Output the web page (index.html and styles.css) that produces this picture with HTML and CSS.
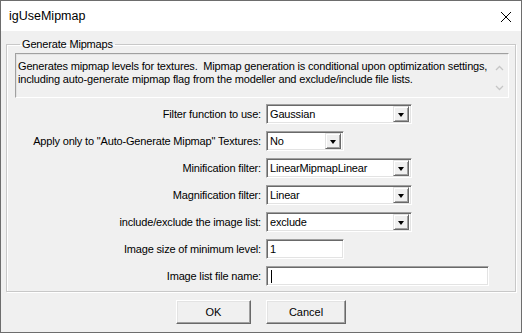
FILE: index.html
```html
<!DOCTYPE html>
<html lang="en">
<head>
  <meta charset="UTF-8">
  <title>igUseMipmap</title>
  <link rel="stylesheet" href="styles.css">
</head>
<body>
  <!-- Dialog window -->
  <div class="window">
    <div class="titlebar">
      <span class="title">igUseMipmap</span>
      <svg class="close" width="12" height="12" viewBox="0 0 12 12">
        <path d="M1 1 L11 11 M11 1 L1 11" stroke="#000" stroke-width="1" fill="none"/>
      </svg>
    </div>

    <div class="client">
      <fieldset class="group">
        <legend>Generate Mipmaps</legend>

        <div class="desc">
          <p>Generates mipmap levels for textures.&nbsp; Mipmap generation is conditional upon optimization settings, including auto-generate mipmap flag from the modeller and exclude/include file lists.</p>
          <div class="vscroll">
            <svg width="9" height="6" viewBox="0 0 9 6"><path d="M1 5 L4.5 1.5 L8 5" stroke="#c6c6c6" stroke-width="1.3" fill="none"/></svg>
            <svg width="9" height="6" viewBox="0 0 9 6"><path d="M1 1 L4.5 4.5 L8 1" stroke="#c6c6c6" stroke-width="1.3" fill="none"/></svg>
          </div>
        </div>

        <div class="form">
          <label>Filter function to use:</label>
          <div class="combo wide"><span class="value">Gaussian</span><span class="drop"></span></div>

          <label>Apply only to "Auto-Generate Mipmap" Textures:</label>
          <div class="combo short"><span class="value">No</span><span class="drop"></span></div>

          <label>Minification filter:</label>
          <div class="combo wide"><span class="value">LinearMipmapLinear</span><span class="drop"></span></div>

          <label>Magnification filter:</label>
          <div class="combo wide"><span class="value">Linear</span><span class="drop"></span></div>

          <label>include/exclude the image list:</label>
          <div class="combo wide"><span class="value">exclude</span><span class="drop"></span></div>

          <label>Image size of minimum level:</label>
          <div class="edit short"><span class="value">1</span></div>

          <label>Image list file name:</label>
          <div class="edit long"><span class="caret"></span></div>
        </div>
      </fieldset>

      <div class="buttons">
        <button class="btn default">OK</button>
        <button class="btn cancel">Cancel</button>
      </div>
    </div>
  </div>
</body>
</html>
```

FILE: styles.css
```css
/* Classic Win32 dialog look */
body {
  margin: 0;
  font-family: "Liberation Sans", Arial, sans-serif;
  font-size: 11px;
  letter-spacing: -0.17px;
  color: #000;
  background: #fff;
}

.window {
  width: 522px;
  height: 333px;
  box-sizing: border-box;
  border: 1px solid #6d6d6d;
  display: flex;
  flex-direction: column;
}

.titlebar {
  height: 30px;
  background: #fff;
  display: flex;
  align-items: center;
  justify-content: space-between;
  padding: 0 9px 0 8px;
}

.title {
  font-size: 12.5px;
  letter-spacing: 0;
}

.close {
  display: block;
  margin-top: 1px;
}

.client {
  flex: 1;
  background: #f0f0f0;
  padding: 7px 5px 0 5px;
}

/* Group box */
.group {
  margin: 0;
  padding: 2px 6px 5px 8px;
  border: 1px solid #c8c8c8;
  box-shadow: inset 1px 1px 0 #fff, 1px 1px 0 #fff;
  min-width: 0;
}

.group legend {
  padding: 0 2px;
  margin-left: 5px;
  line-height: 13px;
}

/* Description (read-only multiline edit) */
.desc {
  height: 45px;
  box-sizing: border-box;
  border: 1px solid;
  border-color: #a0a0a0 #fff #fff #a0a0a0;
  box-shadow: inset 1px 1px 0 #e3e3e3;
  display: flex;
}

.desc p {
  flex: 1;
  margin: 0;
  padding: 6px 0 0 2px;
  line-height: 13px;
}

.vscroll {
  width: 17px;
  display: flex;
  flex-direction: column;
  justify-content: space-between;
  align-items: center;
  padding: 11px 0 6px;
}

.vscroll svg {
  display: block;
}

/* Form rows */
.form {
  display: grid;
  grid-template-columns: 245px auto;
  column-gap: 6px;
  row-gap: 7px;
  margin-top: 6px;
  align-items: center;
  justify-items: start;
}

.form label {
  justify-self: end;
  margin-right: -1px;
}

.combo,
.edit {
  height: 20px;
  box-sizing: border-box;
  border: 1px solid;
  border-color: #a0a0a0 #fff #fff #a0a0a0;
  box-shadow: inset 1px 1px 0 #696969, inset -1px -1px 0 #e3e3e3;
  background: #fff;
  display: flex;
  align-items: center;
  padding: 2px;
}

.wide { width: 146px; }
.short { width: 78px; }
.long { width: 223px; }

.value {
  flex: 1;
  padding-left: 1px;
  line-height: 14px;
  white-space: nowrap;
}

.drop {
  width: 16px;
  height: 16px;
  box-sizing: border-box;
  background: #f0f0f0;
  border: 1px solid;
  border-color: #e3e3e3 #696969 #696969 #e3e3e3;
  box-shadow: inset 1px 1px 0 #fff, inset -1px -1px 0 #a0a0a0;
  display: flex;
  align-items: center;
  justify-content: center;
}

.drop::after {
  content: "";
  border-left: 3.5px solid transparent;
  border-right: 3.5px solid transparent;
  border-top: 4px solid #000;
  margin-top: 1px;
}

.caret {
  width: 1px;
  height: 13px;
  background: #000;
  margin-left: 2px;
}

/* Bottom buttons */
.buttons {
  display: flex;
  gap: 15px;
  margin-top: 8px;
  padding-left: 170px;
}

.btn {
  height: 24px;
  font-family: inherit;
  font-size: 11px;
  color: #000;
  background: #f0f0f0;
  border: 1px solid;
  border-color: #fff #696969 #696969 #fff;
  box-shadow: inset -1px -1px 0 #a0a0a0, inset 1px 1px 0 #e3e3e3;
  padding: 0;
}

.btn.default {
  width: 75px;
}

.btn.cancel {
  width: 80px;
}
```
